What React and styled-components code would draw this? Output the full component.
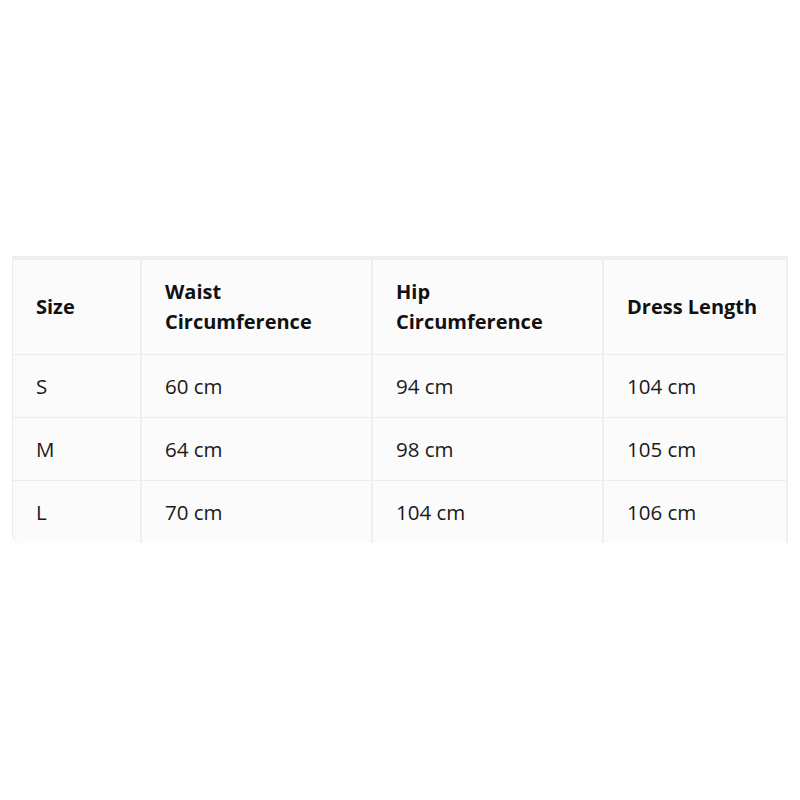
import React from "react";
import styled, { createGlobalStyle } from "styled-components";

const Global = createGlobalStyle`
  html, body { margin: 0; padding: 0; background: #ffffff; }
  body { font-family: "Open Sans", "Noto Sans", sans-serif; color: #111; }
`;

const Page = styled.div`
  width: 800px;
  height: 800px;
  display: flex;
  align-items: flex-start;
  padding-top: 256px;
  padding-left: 12px;
  box-sizing: border-box;
`;

const Wrapper = styled.div`
  width: 776px;
  height: 287px;
  overflow: hidden;
  border-top: 4px solid #eeeeee;
  border-left: 1px solid #ececec;
  border-bottom-left-radius: 8px;
  background: #fbfbfb;
  box-sizing: border-box;
`;

const Table = styled.table`
  border-collapse: collapse;
  width: 775px;
  table-layout: fixed;
`;

const Col = styled.col`
  width: ${(p) => p.$w}px;
`;

const Th = styled.th`
  text-align: left;
  font-weight: 700;
  font-size: 20px;
  line-height: 30px;
  padding: 17px 23px 17px;
  border-right: 2px solid #eeeeee;
  border-bottom: 1px solid #ececec;
  color: #111;
  box-sizing: border-box;
`;

const Td = styled.td`
  font-size: 20.5px;
  line-height: 30px;
  padding: 16px 23px;
  border-right: 2px solid #eeeeee;
  border-bottom: 1px solid #ececec;
  color: #1a1a1a;
  box-sizing: border-box;
`;

const headers = [
  { label: ["Size"], w: 128 },
  { label: ["Waist", "Circumference"], w: 231 },
  { label: ["Hip", "Circumference"], w: 231 },
  { label: ["Dress Length"], w: 184 },
];

const rows = [
  ["S", "60 cm", "94 cm", "104 cm"],
  ["M", "64 cm", "98 cm", "105 cm"],
  ["L", "70 cm", "104 cm", "106 cm"],
];

export default function App() {
  return (
    <>
      <Global />
      <Page>
        <Wrapper>
          <Table>
            <colgroup>
              {headers.map((h) => (
                <Col key={h.label.join()} $w={h.w} />
              ))}
            </colgroup>
            <thead>
              <tr>
                {headers.map((h) => (
                  <Th key={h.label.join()}>
                    {h.label.map((l, i) => (
                      <React.Fragment key={l}>
                        {i > 0 && <br />}
                        {l}
                      </React.Fragment>
                    ))}
                  </Th>
                ))}
              </tr>
            </thead>
            <tbody>
              {rows.map((r) => (
                <tr key={r[0]}>
                  {r.map((c, i) => (
                    <Td key={i}>{c}</Td>
                  ))}
                </tr>
              ))}
            </tbody>
          </Table>
        </Wrapper>
      </Page>
    </>
  );
}
